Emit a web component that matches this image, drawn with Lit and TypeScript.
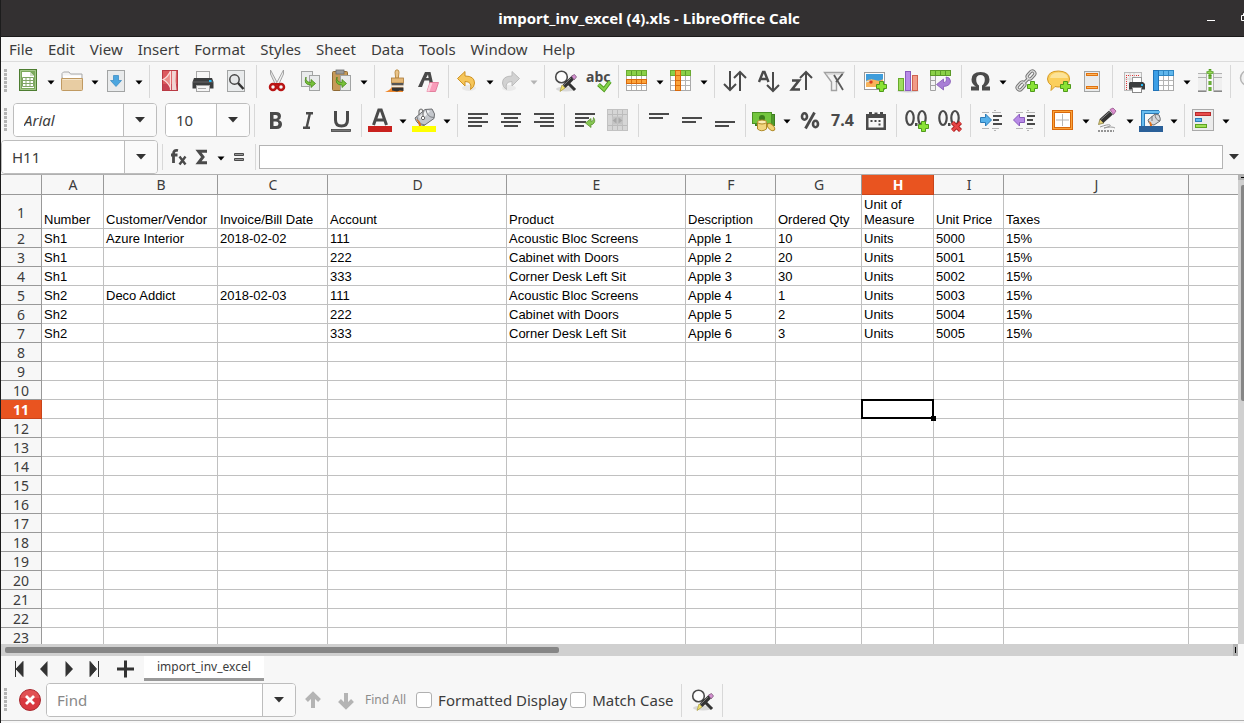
import { LitElement, html, svg, css, nothing } from "lit";
import { customElement, property } from "lit/decorators.js";
import { classMap } from "lit/directives/class-map.js";

const D = "#4a4a4a";

const plus = (x: number, y: number) => svg`<path d="M${x + 3.5} ${y + 0.5}h4v3h3v4h-3v3h-4v-3h-3v-4h3z" fill="#8ae234" stroke="#4f9a1a"/>`;
const lines = (rows: number[][]) => svg`${rows.map(([x, y, w]) => svg`<rect x=${x} y=${y} width=${w} height="2" fill=${D}/>`)}`;
const sheet = (x: number, y: number, w: number, h: number) => svg`<rect x=${x + 0.5} y=${y + 0.5} width=${w - 1} height=${h - 1} fill="#e9ebec" stroke="#a2a4a4"/>`;
const grid = (top: boolean) => svg`
  <rect x="1.5" y="1.5" width="20" height="20" fill="#fff" stroke="#aaa"/>
  <path d="M6.500 6V21M11.500 6V21M16.500 6V21M2 11.500H21M2 16.500H21" stroke="#b4b4b4"/>
  <rect x="1.5" y="1.5" width="20" height="5" fill=${top ? "#8ad048" : "#5fb6ec"} stroke=${top ? "#6aab31" : "#2f86c2"}/>
  <path d="M6.500 2V6M11.500 2V6M16.500 2V6" stroke=${top ? "#5c9a29" : "#2f86c2"}/>`;
const findPencil = svg`
  <ellipse cx="13" cy="20" rx="10" ry="2.500" fill="#000" opacity=".12"/>
  <circle cx="8.500" cy="8" r="5.800" fill="#fdfdfd" stroke="#4a4a4a" stroke-width="1.600"/>
  <path d="M13 12l9 9" stroke="#333" stroke-width="3"/>
  <path d="M20 8.500l-9 9" stroke="#333" stroke-width="4.200"/><path d="M18 9l-8 8" stroke="#777" stroke-width="1"/>
  <path d="M18.500 7l3-1.500 2 2.500-2.500 3z" fill="#d48fd0" stroke="#7d5a7b" stroke-width=".8"/>
  <path d="M9 16l3 3-5 3.500z" fill="#f2e36b" stroke="#a8983a" stroke-width=".7"/>`;

const icons: Record<string, unknown> = {
  new: svg`<rect x="3.500" y=".5" width="17" height="21" fill="#7ba95c" stroke="#4d7d31"/><path d="M4.500 1.500h15v19h-15z" fill="none" stroke="#a5c98c"/>
    <path d="M6 3h8l4 4v12H6z" fill="#fff"/><path d="M14 3v4h4z" fill="#cfdcc6"/>
    <path d="M6.500 8.500h11v9h-11zM10 8.500v9M14 8.500v9M6.500 11.500h11M6.500 14.500h11" fill="none" stroke="#7fa566"/>`,
  open: svg`<path d="M2 9V4.500L3.500 3H9l1.500 2H22v5z" fill="#f3f3f3" stroke="#a9a9a9"/><rect x="3" y="6.500" width="18" height="3" fill="#fff"/>
    <path d="M1.500 9.500h21V20.500q0 1-1 1h-19q-1 0-1-1z" fill="#e8cda3" stroke="#c09a62"/><path d="M2.500 10.500h19" stroke="#f5e6cc"/>`,
  save: svg`${sheet(3, 1, 18, 22)}<path d="M9.500 6.500h5v5h3L12 17.500 6.500 11.500h3z" fill="#4ba6df" stroke="#3287c0" stroke-width=".7"/>`,
  pdf: svg`<rect x="4.500" y="1.500" width="15" height="20" fill="#dc5a5f" stroke="#b93a44"/><path d="M5 15h14v6H5z" fill="#b8324a" opacity=".6"/>
    <path d="M12.500 2L5.500 10.500 12.500 18V2z" fill="#ec8f8c"/><path d="M12.500 2Q10 8 5 10.500 10 13 12.500 19M12.500 2V21" stroke="#f9dcdb" fill="none" stroke-width="1.200"/><path d="M14 2h4q-1 10 .5 19H14z" fill="#f0d4d3"/>`,
  print: svg`<rect x="5.500" y="2.500" width="13" height="8" fill="#f7f7f7" stroke="#a8a8a8"/><path d="M3 9h18l1.500 4v6.500h-21V13z" fill="#3b3d3e"/>
    <path d="M2 13h20" stroke="#666"/><rect x="18" y="11" width="2.500" height="2" fill="#25b8f4"/><rect x="5.500" y="16.500" width="13" height="6" fill="#f5f5f5" stroke="#a4a4a4"/><path d="M7 19.500h8" stroke="#aaa"/>`,
  preview: svg`${sheet(3, 1, 18, 22)}<circle cx="10.500" cy="10.500" r="4.700" fill="#e4e6e7" stroke="#444" stroke-width="1.500"/><path d="M14 14l5.500 6" stroke="#333" stroke-width="2.500"/>`,
  cut: svg`<path d="M5.500 1l7.500 14-2 2L5.500 5z" fill="#e6e6e6" stroke="#9b9b9b" stroke-width=".9"/><path d="M18.500 1L11 15l2 2 5.500-12z" fill="#f2f2f2" stroke="#9b9b9b" stroke-width=".9"/>
    <ellipse cx="8" cy="18" rx="3" ry="3" fill="none" stroke="#b91414" stroke-width="2.500"/><ellipse cx="16" cy="18" rx="3" ry="3" fill="none" stroke="#b91414" stroke-width="2.500"/><path d="M10 15h4" stroke="#b91414" stroke-width="2"/>`,
  copy: svg`${sheet(3, 2, 12, 16)}${sheet(11, 6, 11, 16)}<path d="M8 8q-1 5 5 5.500V10.500l4.500 4-4.500 4V16q-8 0-5-8z" fill="#76c03a" stroke="#48861b" stroke-width=".8"/>`,
  paste: svg`<rect x="3.500" y="2.500" width="15" height="19" rx="1" fill="#c79a58" stroke="#8f6a35"/><rect x="7" y="1" width="8" height="4" fill="#9a9a9a" stroke="#6c6c6c" stroke-width=".8"/>
    ${sheet(11, 6, 11, 16)}<path d="M8 8q-1 5 5 5.500V10.500l4.500 4-4.500 4V16q-8 0-5-8z" fill="#76c03a" stroke="#48861b" stroke-width=".8"/>`,
  brush: svg`<path d="M14 .8q2 0 2 2.500l-.7 6h-2.600l-.7-6q0-2.500 2-2.500z" fill="#e9c48a" stroke="#b58538" stroke-width=".9"/><rect x="8.500" y="9" width="12" height="5" fill="#e5b877" stroke="#aa7a38" stroke-width=".8"/>
    <path d="M2 23q6-2 7-6.500h11V23z" fill="#ef8a2f"/><rect x="8.500" y="14" width="12" height="2.500" fill="#555"/><rect x="8.500" y="16.500" width="12" height="2" fill="#f4ebdd"/><path d="M9 18.500h11.500V22L17 21.500 14 22.500 9 21.500z" fill="#333"/>`,
  clear: svg`<path d="M2 18L9 3h5.500l2.500 11h-3.500l-.4-2.500H8.500L6 18zM10 9h2.600l-.6-3.500z" fill=${D} fill-rule="evenodd"/><path d="M14 13.500h8.500L19.500 22.500h-8.500z" fill="#f99cba" stroke="#e07796" stroke-width=".9"/><path d="M14 14l-3 8.500h2.500L16.500 14z" fill="#fdd0dd"/>`,
  undo: svg`<ellipse cx="14" cy="19" rx="7" ry="3" fill="#000" opacity=".06"/><path d="M10 2.500v4.500q9.500 0 9.500 7 0 4-4 6.500 2-8-5.500-8v4.500L2.500 9.500z" fill="#f6c65a" stroke="#cf9322"/>`,
  redo: svg`<ellipse cx="10" cy="19" rx="7" ry="3" fill="#000" opacity=".05"/><path d="M13 2.500v4.500Q3.500 7 3.500 14q0 4 4 6.500-2-8 5.500-8v4.500l7.500-7.500z" fill="#d2d2d2" stroke="#bcbcbc"/>`,
  find: findPencil,
  spell: svg`<text x="0" y="13" font-size="14" font-weight="700" fill=${D}>abc</text><path d="M12.500 15.500l5.500 5 6-8" fill="none" stroke="#4e9a1c" stroke-width="4"/><path d="M12.500 15.500l5.500 5 6-8" fill="none" stroke="#84d24a" stroke-width="2.200"/>`,
  row: svg`${grid(true)}<rect x="1.500" y="10.500" width="20" height="4" fill="#fba43b" stroke="#d9690c"/><path d="M6.500 11v3M11.500 11v3M16.500 11v3" stroke="#d9690c"/>`,
  column: svg`${grid(true)}<rect x="6.500" y="1.500" width="5" height="20" fill="#fba43b" stroke="#d9690c"/><path d="M7 6.500h4M7 11.500h4M7 16.500h4" stroke="#d9690c"/>`,
  sort: svg`<path d="M7 2v19M1 15l6 6 6-6M17 22V3M11 9l6-6 6 6" fill="none" stroke=${D} stroke-width="2"/>`,
  sortAsc: svg`<path d="M3 13L7 3h1.500l4 10M5 10h6" fill="none" stroke=${D} stroke-width="2.400"/><path d="M17 3v19M11 16l6 6 6-6" fill="none" stroke=${D} stroke-width="2"/>`,
  sortDesc: svg`<path d="M3 11.500h7L3 20.500h8" fill="none" stroke=${D} stroke-width="2.600"/><path d="M17 21V2.500M11 9l6-6 6 6" fill="none" stroke=${D} stroke-width="2"/>`,
  filter: svg`<path d="M2.500 3.500h19L14.500 13v8.500h-5V13z" fill="#f2f2f2" stroke="#a2a2a2" stroke-width="1.400"/><path d="M4 5h16" stroke="#ccc"/><path d="M12 6l9 15M20.500 5L14 13" stroke="#5b5b5b" stroke-width="1.800"/>`,
  image: svg`<rect x="1.500" y="3.500" width="20" height="17" fill="#fff" stroke="#9a9a9a"/><rect x="3" y="5" width="17" height="8" fill="#3f9ddb"/><path d="M3 12q4-3 9-1t8-1v8H3z" fill="#f7b35a"/><path d="M3 13q4-1 6-2" stroke="#cfe8f7" fill="none"/><circle cx="8" cy="13" r="1.700" fill="#dd3d1b"/>${plus(13, 12)}`,
  chart: svg`<ellipse cx="12" cy="22" rx="11" ry="1.500" fill="#000" opacity=".15"/><rect x="2.500" y="9.500" width="5" height="12" fill="#9fdc5d" stroke="#68ab2c"/><rect x="9.500" y="2.500" width="5" height="19" fill="#b78ae6" stroke="#8a5bbd"/><rect x="16.500" y="6.500" width="5" height="15" fill="#f19c88" stroke="#cf6350"/>`,
  pivot: svg`<path d="M1.500 6.500h5v15h-5zM2 11.500h4M2 16.500h4" fill="#f3f3f3" stroke="#a2a2a2"/><rect x="1.500" y="1.500" width="20" height="5" fill="#8ad048" stroke="#5c9a29"/><path d="M6.500 2v4M11.500 2v4M16.500 2v4" stroke="#5c9a29"/>
    <path d="M17 8q4 0 4.500 4 0 5-7 5.500V21L7.500 15.500 14.500 10v3.500q4 0 2.500-5.500z" fill="#a87ed6" stroke="#8459b5" stroke-width=".8"/>`,
  omega: svg`<path d="M3 21.500V17.500H8Q3.500 15 3.500 10.500 3.500 3 12.500 3T21.500 10.500Q21.500 15 17 17.500H22V21.500H14V16.500Q16.800 14.500 16.800 10.500 16.800 6 12.500 6T8.200 10.500Q8.200 14.500 11 16.500V21.500z" fill=${D}/>`,
  link: svg`<g fill="none" stroke="#777" stroke-width="3.200"><rect x="14.500" y="1.500" width="5" height="9" rx="2.500" transform="rotate(42 17 6)"/><rect x="4.500" y="12.500" width="5" height="9" rx="2.500" transform="rotate(42 7 17)"/><path d="M15 9l-6 6"/></g>
    <g fill="none" stroke="#dedede" stroke-width="1.300"><rect x="14.500" y="1.500" width="5" height="9" rx="2.500" transform="rotate(42 17 6)"/><rect x="4.500" y="12.500" width="5" height="9" rx="2.500" transform="rotate(42 7 17)"/><path d="M15 9l-6 6"/></g>${plus(13, 12)}`,
  comment: svg`<path d="M11.500 2Q22.500 2.500 22.500 10T12 18q-2 0-4-.5L4 21.500l.5-5Q.5 14 .5 10 1 2 11.500 2z" fill="#fbcf5c" stroke="#d59a25"/><path d="M3 9q1-5.500 9-5.500t9 5.500z" fill="#fde7a8" opacity=".8"/>${plus(13, 12)}`,
  headers: svg`${sheet(4, 2, 16, 21)}<rect x="6" y="4" width="12" height="3" fill="#e1730f"/><path d="M7 5.500h10" stroke="#fcb45c"/><rect x="6" y="17" width="12" height="3" fill="#e1730f"/><path d="M7 18.500h10" stroke="#fcb45c"/>`,
  printArea: svg`<rect x="3.500" y="3.500" width="17" height="18" fill="#f2f2f2" stroke="#bbb"/><path d="M5 6.500h14M5.500 6v15" stroke="#e03434" stroke-dasharray="1 1"/><path d="M9 4v17M13 4v17M4 10h16" stroke="#d4d4d4"/>
    <rect x="11.500" y="8.500" width="9" height="5" fill="#fff" stroke="#999"/><path d="M9 13h13l2 2v5.500H8V14z" fill="#3b3d3e"/><rect x="20" y="15" width="2" height="2" fill="#25b8f4"/><rect x="11.500" y="18.500" width="9" height="5" fill="#fff" stroke="#888"/>`,
  freeze: svg`${grid(false)}<rect x="1.500" y="1.500" width="5" height="20" fill="#3c9fe6" stroke="#2274b8"/><path d="M11.500 2V6M16.500 2V6" stroke="#2f86c2"/>`,
  split: svg`<path d="M0 4.500h8.500v17H0M0 8.500h8M24 4.500h-8.500v17H24M24 8.500h-8" fill="#efefef" stroke="#b2b2b2"/><path d="M0 22.500h8.500M15.500 22.500H24" stroke="#888"/><path d="M12 6v17" stroke="#4e9a1c" stroke-width="3" stroke-dasharray="4 2"/><path d="M12 6v17" stroke="#84c24c" stroke-width="1" stroke-dasharray="4 2"/><path d="M12 0v7M8.500 3.500h7" stroke="#4e9a1c" stroke-width="2.600"/><path d="M12 1v5M9.500 3.500h5" stroke="#9fdc5d"/>`,
  draw: svg`<circle cx="9" cy="9" r="7.500" fill="#f1f1f1" stroke="#b5b5b5" stroke-width="1.500"/>`,
  bold: svg`<path d="M7 4h6q5 0 5 4.300 0 2.700-2.500 3.700 3.500 1 3.500 4.300Q19 21 13.500 21H7zM10.500 7v3.700h2.300q2 0 2-1.900T12.800 7zM10.500 13.500V18h2.500q2.500 0 2.500-2.300 0-2.200-2.500-2.200z" fill=${D} fill-rule="evenodd"/>`,
  italic: svg`<path d="M10 5.200h7M7 19.800h7M14 5L10.500 20" stroke=${D} stroke-width="2.400" fill="none"/>`,
  underline: svg`<path d="M6.500 3v9q0 6 6 6t6-6V3" fill="none" stroke=${D} stroke-width="3"/><rect x="2.500" y="21.500" width="19" height="2" fill="#777" stroke="#444" stroke-width=".8"/>`,
  fontColor: svg`<path d="M5.500 17L10.800 2h2.400L18.500 17M7.500 12h9" fill="none" stroke=${D} stroke-width="3"/><rect y="18" width="24" height="6" fill="#c9211e"/>`,
  fill: svg`<path d="M3 10L13 1.500 20 1q4 5 2 9.500L12 17.500Q5 17 3 10z" fill="#c4c7cc" stroke="#6b6d70"/><path d="M7 9l8-7 3 1-8 9z" fill="#f2f3f4"/><path d="M14 1.500q1 8 8 8M5 9q1 7 8 8" stroke="#7b7e83" fill="none"/><path d="M7 7V3q2-4 4 0V9" fill="none" stroke="#777" stroke-width="1.200"/><circle cx="11" cy="10" r="1.700" fill="#fff" stroke="#666"/><path d="M4 11q5 2 5 7H7q0-4-3-7z" fill="#e1701a"/><rect y="18" width="24" height="6" fill="#ff0"/>`,
  left: lines([[2, 5, 20], [2, 9, 14], [2, 13, 20], [2, 17, 14]]),
  center: lines([[2, 5, 20], [5, 9, 14], [2, 13, 20], [5, 17, 14]]),
  right: lines([[2, 5, 20], [8, 9, 14], [2, 13, 20], [8, 17, 14]]),
  wrap: svg`${lines([[2, 5, 20], [2, 9, 14], [2, 13, 11], [2, 17, 9]])}<path d="M20.500 9.500q3 4-1 7H18v3L12.500 15 18 10.500v3q3 0 2.500-4z" fill="#86c653" stroke="#4f8a20" stroke-width=".7"/>`,
  merge: svg`<rect x="1.500" y="1.500" width="20" height="21" fill="#d6d6d6" stroke="#c2c2c2"/><path d="M6.500 2v20M11.500 2v20M16.500 2v20M2 6.500h19M2 17.500h19" stroke="#bcbcbc"/><rect x="6" y="8.500" width="11" height="8" fill="#c4c4c4"/><path d="M6.500 12.500l4-3v6zM16.500 12.500l-4-3v6z" fill="#a9a9a9"/>`,
  top: lines([[2, 5, 20], [2, 9, 14]]),
  middle: lines([[2, 9, 20], [2, 13, 14]]),
  bottom: lines([[2, 13, 20], [2, 17, 14]]),
  currency: svg`<rect x="3.500" y="6.500" width="19" height="11" fill="#4e9a2c" stroke="#3d7d1f"/><rect x=".5" y="4.500" width="19" height="11" fill="#73c63e" stroke="#4b9125"/><circle cx="10" cy="10" r="3" fill="#3c7d1c"/><ellipse cx="19" cy="19" rx="4.500" ry="2.500" transform="rotate(45 19 19)" fill="#f0d273" stroke="#b08a27"/>
    <path d="M5.500 14v7q4 3.500 9 0v-7z" fill="#f2d67e" stroke="#b08a27"/><ellipse cx="10" cy="14" rx="4.500" ry="2" fill="#fbeeb5" stroke="#b08a27"/>`,
  percent: svg`<g fill="none" stroke=${D}><ellipse cx="6.500" cy="8.500" rx="2.500" ry="3.200" stroke-width="2.600"/><ellipse cx="17.500" cy="16" rx="2.500" ry="3.200" stroke-width="2.600"/><path d="M16.500 4.500l-9 16" stroke-width="2.800"/></g>`,
  number: svg`<text x="0" y="18" font-size="16" font-weight="700" fill=${D}>7.4</text>`,
  date: svg`<path d="M2 6h20v16H2zM4.500 10v9.500h15V10z" fill=${D} fill-rule="evenodd"/><path d="M5 4h3v3H5zM10.500 4.500h3V7h-3zM16 4h3v3h-3z" fill=${D}/><path d="M6.500 13h10M14.500 16.500h4" stroke=${D} stroke-width="2" stroke-dasharray="2 2"/>`,
  addDec: svg`<g fill="none" stroke=${D} stroke-width="2.200"><ellipse cx="5" cy="10" rx="3.700" ry="7"/><ellipse cx="17" cy="10" rx="3.700" ry="7"/></g><rect x="10" y="15" width="2.500" height="3" fill=${D}/>${plus(13, 13)}`,
  delDec: svg`<g fill="none" stroke=${D} stroke-width="2.200"><ellipse cx="5" cy="10" rx="3.700" ry="7"/><ellipse cx="17" cy="10" rx="3.700" ry="7"/></g><rect x="10" y="15" width="2.500" height="3" fill=${D}/><path d="M14.500 14.500l8 8M22.500 14.500l-8 8" stroke="#a31616" stroke-width="4.200"/><path d="M14.500 14.500l8 8M22.500 14.500l-8 8" stroke="#e64545" stroke-width="2.500"/>`,
  indent: svg`<path d="M3 4.500h7M13 4.500h9M3 20.500h7M13 20.500h7M15 2.500h2M15 22.500h2" stroke="#b5b5b5"/><path d="M14 8h9M14 12h6M14 16h9" stroke=${D} stroke-width="2"/><path d="M1.500 9.500h5v-3.500l6 6-6 6v-3.500h-5z" fill="#57b1ea" stroke="#2c7cb8"/>`,
  outdent: svg`<path d="M4 4.500h7M14 4.500h9M4 20.500h7M14 20.500h7M15 2.500h2M15 22.500h2" stroke="#b5b5b5"/><path d="M15 8h8M15 12h6M15 16h8" stroke=${D} stroke-width="2"/><path d="M12.500 9.500h-5v-3.500l-6 6 6 6v-3.500h5z" fill="#b78ae6" stroke="#8a5bbd"/>`,
  borders: svg`<rect x="2.500" y="3.500" width="18" height="17" fill="#fff" stroke="#d9690c" stroke-width="3"/><rect x="2.500" y="3.500" width="18" height="17" fill="none" stroke="#fba43b"/><path d="M11.500 6v12M5 12h13" stroke="#b5b5b5"/>`,
  lineStyle: svg`<path d="M5 19q8-3 10-2t-6 3q8-2 11 0" stroke="#999" fill="none"/><path d="M3 23h16" stroke="#333" stroke-dasharray="2 1"/><path d="M3.500 16.500L5 11l4 4z" fill="#e9d57a" stroke="#7a7030" stroke-width=".7"/><path d="M6.500 13L16 4.500" stroke="#333" stroke-width="5.500"/><path d="M6 11.500L15 3.500" stroke="#888"/><path d="M15 1.500l3-1.500 3 3-2.500 3.500z" fill="#dc8fd0" stroke="#93548a" stroke-width=".8"/>`,
  borderColor: svg`<path d="M4 18V4h16" fill="none" stroke="#2c7cb8" stroke-width="4"/><path d="M4 18V4h17" fill="none" stroke="#68bdf0" stroke-width="2"/><path d="M9 12l7-6 4 1q2 4 1 6l-6 4q-5 0-6-5z" fill="#d7d9dc" stroke="#6b6d70"/><path d="M13 8v5M16 6q0 6 5 7" stroke="#777" fill="none"/><path d="M10 13q3 1 3 5h-2q0-3-1-5z" fill="#e1701a"/><rect y="18" width="24" height="6" fill="#2a6099"/>`,
  conditional: svg`<rect x="1.500" y="1.500" width="21" height="21" fill="#ececec" stroke="#a9a9a9"/><rect x="4.500" y="4.500" width="15" height="3" fill="#e84c4c" stroke="#b92a2a"/><rect x="4.500" y="10.500" width="6" height="3" fill="#62b7ee" stroke="#2c7cb8"/><rect x="4.500" y="16.500" width="11" height="3" fill="#9fe055" stroke="#5fa321"/>`,
  fx: svg`<path d="M12 5.500q-4.500-1-4.500 3.500V18M5 10h6.500" fill="none" stroke=${D} stroke-width="2.800"/><path d="M13.500 11.500l6 8M19.500 11.500l-6 8" stroke=${D} stroke-width="2.400"/>`,
  sum: svg`<path d="M17 6.200H8.500l4.500 5.800-4.500 5.800H17" fill="none" stroke=${D} stroke-width="3"/>`,
  equals: svg`<path d="M7.500 8.500h9v2h-9zM7.500 13.500h9v2h-9z" fill="#999" stroke=${D}/>`,
  first: svg`<path d="M8.500 4v16M16 4.500L9 12 16 19.500z" fill="#333" stroke="#333"/>`,
  prev: svg`<path d="M15.500 4L8 12l7.500 8z" fill="#333"/>`,
  next: svg`<path d="M8.500 4L16 12l-7.500 8z" fill="#333"/>`,
  last: svg`<path d="M16.500 4v16M8 4.500L14.500 12 8 19.500z" fill="#333" stroke="#333"/>`,
  add: svg`<path d="M12.500 3.500v17M4 12h17" stroke="#333" stroke-width="3"/>`,
  close: svg`<circle cx="12" cy="12" r="10.500" fill="#d9383f" stroke="#a82a30"/><path d="M2.500 10q2-8 9.500-8t9.500 8z" fill="#ea6a6a" opacity=".5"/><path d="M8 8l8 8M16 8l-8 8" stroke="#fff" stroke-width="2.800"/>`,
  up: svg`<path d="M12 20V7M5.500 12.500L12 6l6.500 6.500" fill="none" stroke="#b4b4b4" stroke-width="4"/>`,
  down: svg`<path d="M12 5v13M5.500 12.500L12 19l6.500-6.500" fill="none" stroke="#b4b4b4" stroke-width="4"/>`,
};

const icon = (name: string) => html`<svg class="icon" width="24" height="24" viewBox="0 0 24 24" aria-hidden="true">${icons[name]}</svg>`;
const caret = html`<svg width="8" height="5" viewBox="0 0 8 5" aria-hidden="true"><path d="M.5 .5h7L4 4.500z" fill="currentColor"/></svg>`;
const bigCaret = html`<svg width="10" height="6" viewBox="0 0 10 6" aria-hidden="true"><path d="M0 0h10L5 5.500z" fill="#333"/></svg>`;

/** "|" is a separator; a trailing "+" adds a drop-down arrow; "!" greys it out. */
const STANDARD = "new+ open+ save+ | pdf print preview | cut copy paste+ | brush clear | undo+ redo+! | find spell | row+ column+ | sort sortAsc sortDesc filter | image chart pivot | omega+ link comment headers | printArea freeze+ split | draw";
const FORMATTING = "| bold italic underline | fontColor+ fill+ | left center right | wrap merge | top middle bottom | currency+ percent number date | addDec delDec | indent outdent | borders+ lineStyle+ borderColor+ | conditional+";

const tools = (spec: string) =>
  spec.split(" ").map((t) => {
    if (t === "|") return html`<span class="sep"></span>`;
    const name = t.replace(/[+!]/g, "");
    if (!t.includes("+")) return html`<button class="tool" aria-label=${name}>${icon(name)}</button>`;
    return html`<button class="tool narrow" aria-label=${name}>${icon(name)}</button><button class=${classMap({ drop: true, dim: t.includes("!") })} aria-label="${name} options">${caret}</button>`;
  });

const COLS = [
  ["A", 62], ["B", 114], ["C", 110], ["D", 179], ["E", 179], ["F", 90], ["G", 86], ["H", 72], ["I", 70], ["J", 185],
] as const;

const DATA: string[][] = [
  ["Number", "Customer/Vendor", "Invoice/Bill Date", "Account", "Product", "Description", "Ordered Qty", "Unit of Measure", "Unit Price", "Taxes"],
  ["Sh1", "Azure Interior", "2018-02-02", "111", "Acoustic Bloc Screens", "Apple 1", "10", "Units", "5000", "15%"],
  ["Sh1", "", "", "222", "Cabinet with Doors", "Apple 2", "20", "Units", "5001", "15%"],
  ["Sh1", "", "", "333", "Corner Desk Left Sit", "Apple 3", "30", "Units", "5002", "15%"],
  ["Sh2", "Deco Addict", "2018-02-03", "111", "Acoustic Bloc Screens", "Apple 4", "1", "Units", "5003", "15%"],
  ["Sh2", "", "", "222", "Cabinet with Doors", "Apple 5", "2", "Units", "5004", "15%"],
  ["Sh2", "", "", "333", "Corner Desk Left Sit", "Apple 6", "3", "Units", "5005", "15%"],
];

@customElement("calc-grid")
export class CalcGrid extends LitElement {
  @property({ type: Number }) rows = 23;
  @property() column = "H";
  @property({ type: Number }) row = 11;

  static styles = css`
    :host { display: block; overflow: hidden; background: #fff; }
    table { width: 100%; table-layout: fixed; border-collapse: separate; border-spacing: 0; font: 13px/15px "Liberation Sans", Arial, sans-serif; color: #000; }
    th { box-sizing: border-box; padding: 0; background: #f7f7f7; color: #3c3c3c; font: 14px/18px "Noto Sans", sans-serif; text-align: center; border: 0 solid #999; border-width: 0 1px 1px 0; }
    thead th { height: 20px; padding-left: 1px; }
    tbody th { padding-top: 1px; line-height: 17px; }
    thead th:last-child, td:last-child { border-right: 0; }
    .index { width: 41px; }
    td { box-sizing: border-box; height: 19px; padding: 2px 2px 0; vertical-align: bottom; border: 0 solid #c0c0c0; border-width: 0 1px 1px 0; line-height: 16px; }
    .tall td { height: 34px; line-height: 15px; padding: 0 2px 1px; }
    .on { background: #e95420; color: #fff; font-weight: 700; border-color: #c8441a; }
    .cursor { position: relative; }
    .frame { position: absolute; inset: -1px; border: 2px solid #000; }
    .handle { position: absolute; right: -4px; bottom: -4px; width: 5px; height: 5px; background: #000; }
  `;

  render() {
    return html`<table>
      <colgroup><col class="index">${COLS.map(([, w]) => html`<col style="width:${w}px">`)}<col></colgroup>
      <thead><tr><th></th>${COLS.map(([c]) => html`<th scope="col" class=${classMap({ on: c === this.column })}>${c}</th>`)}<th></th></tr></thead>
      <tbody>${Array.from({ length: this.rows }, (_, i) => html`<tr class=${classMap({ tall: i === 0 })}>
        <th scope="row" class=${classMap({ on: i + 1 === this.row })}>${i + 1}</th>
        ${COLS.map(([c], k) => {
          const cur = c === this.column && i + 1 === this.row;
          return html`<td class=${classMap({ cursor: cur })}>${DATA[i]?.[k] ?? nothing}${cur ? html`<span class="frame"><span class="handle"></span></span>` : nothing}</td>`;
        })}<td></td></tr>`)}</tbody>
    </table>`;
  }
}

@customElement("app-root")
export class AppRoot extends LitElement {
  static styles = css`
    :host { display: flex; flex-direction: column; box-sizing: border-box; height: 100vh; overflow: hidden; border-left: 1px solid #1c1c1c; background: #f7f7f7; color: #3c3c3c; font: 15px/20px "Noto Sans", sans-serif; }
    button { font: inherit; color: inherit; background: none; border: 0; padding: 0; margin: 0; }
    input { font: inherit; color: inherit; box-sizing: border-box; min-width: 0; margin: 0; outline: none; }
    svg { display: block; flex: none; }
    .icon { overflow: visible; }
    .title { display: flex; align-items: center; flex: none; height: 36px; background: #333031; border-bottom: 1px solid #1b1a1a; color: #fff; overflow: hidden; }
    h1 { flex: 1; margin: 0; padding-left: 102px; font: 700 15px/20px "Noto Sans", sans-serif; text-align: center; }
    .min, .max { flex: none; height: 24px; overflow: hidden; }
    .min { width: 40px; }
    .max { width: 9px; }
    .menu { display: flex; gap: 15px; flex: none; height: 24px; padding-left: 8px; border-bottom: 1px solid #dcdcdc; }
    .menu button { white-space: nowrap; }
    .bar { display: flex; align-items: center; flex: none; box-sizing: border-box; height: 39px; padding-bottom: 1px; overflow: hidden; }
    .bar > * { flex: none; }
    .grip { width: 3px; height: 24px; margin: 0 6px 0 3px; background: repeating-linear-gradient(#b4b4b4 0 3px, transparent 3px 4px); }
    .tool { width: 33px; height: 32px; padding: 4px 4px 4px 5px; }
    .narrow { width: 31px; padding: 4px 4px 4px 3px; }
    .tight { width: 24px; height: 32px; padding: 4px 0; }
    .drop { width: 13px; height: 32px; padding: 3px 2px 0 3px; color: #000; }
    .dim { color: #b4b4b4; }
    .sep { width: 1px; height: 33px; margin: 0 3px 0 4px; background: #d8d8d8; }
    .combo { display: flex; box-sizing: border-box; height: 34px; border: 1px solid #bdbdbd; border-radius: 4px; background: #fff; overflow: hidden; }
    .combo input { flex: 1; border: 0; background: #fff; padding: 0 10px 1px; }
    .combo button { display: flex; align-items: center; justify-content: center; width: 33px; border-left: 1px solid #bdbdbd; background: #fafafa; }
    .font { width: 144px; margin-right: 8px; }
    .font input { font-style: italic; }
    .size { width: 85px; }
    .formula { height: 35px; padding: 0; border-bottom: 1px solid #b0b0b0; }
    .formula .sep { height: 26px; }
    .cell { width: 157px; }
    .formula .line { flex: 1; height: 24px; border: 1px solid #b4b4b4; background: #fff; padding: 0 4px; }
    .expand { display: flex; justify-content: center; width: 21px; }
    .sheet { display: flex; flex: 1; min-height: 0; }
    calc-grid { flex: 1; min-width: 0; }
    .vscroll { flex: none; width: 6px; background: #d0d0d0; }
    .vcap { box-sizing: border-box; height: 5px; padding: 2px 0 0 3px; background: #b2b2b2; }
    .vcap::before { content: ""; display: block; height: 1px; background: #000; }
    .vthumb { height: 46%; margin: 5px 0 0 3px; border-radius: 2px 0 0 2px; background: #868686; }
    .hscroll { display: flex; align-items: center; flex: none; height: 12px; margin-right: 6px; background: #d0d0d0; }
    .htrack { flex: 1; }
    .hthumb { width: 45%; height: 6px; margin-left: 4px; border-radius: 2px; background: #868686; }
    .hcap { box-sizing: border-box; width: 5px; height: 12px; padding: 3px 2px; background: #b2b2b2; }
    .hcap::before { content: ""; display: block; width: 1px; height: 6px; background: #000; }
    .tabs { display: flex; align-items: center; flex: none; height: 25px; margin-bottom: 1px; padding-left: 6px; }
    .tabs .nav { width: 25px; height: 24px; }
    .tabs .plus { width: 37px; padding-left: 6px; }
    .tab { box-sizing: border-box; height: 25px; padding: 0 13px; border-bottom: 3px solid #999; background: #fff; font-size: 12px; line-height: 20px; }
    .findbar { height: 39px; padding-bottom: 2px; border-bottom: 1px solid #b0b0b0; margin-bottom: 2px; }
    .findbar .shut { width: 33px; padding-left: 5px; }
    .search { width: 250px; }
    .search input::placeholder { color: #888; opacity: 1; }
    .findall { padding: 0 10px 0 3px; font-size: 12px; color: #8c8c8c; }
    .check { display: flex; align-items: center; gap: 6px; margin-right: 3px; }
    .check input { appearance: none; width: 16px; height: 16px; border: 1px solid #b0b0b0; border-radius: 3px; background: #fff; }
  `;

  render() {
    return html`
      <header class="title">
        <h1>import_inv_excel (4).xls - LibreOffice Calc</h1>
        <button class="min" aria-label="Minimize"><svg width="40" height="24" viewBox="0 0 40 24"><path d="M12 14.500h8" stroke="#fff"/></svg></button>
        <button class="max" aria-label="Maximize"><svg width="16" height="24" viewBox="0 0 16 24"><path d="M6.500 9.500h6v5h-6zM8.500 9V7.500h6V12" fill="none" stroke="#fff"/></svg></button>
      </header>
      <nav class="menu">${["File", "Edit", "View", "Insert", "Format", "Styles", "Sheet", "Data", "Tools", "Window", "Help"].map((m) => html`<button>${m}</button>`)}</nav>
      <div class="bar" role="toolbar" aria-label="Standard"><span class="grip"></span>${tools(STANDARD)}</div>
      <div class="bar" role="toolbar" aria-label="Formatting">
        <span class="grip"></span>
        <div class="combo font"><input aria-label="Font name" .value=${"Arial"}><button aria-label="Font list">${bigCaret}</button></div>
        <div class="combo size"><input aria-label="Font size" .value=${"10"}><button aria-label="Size list">${bigCaret}</button></div>
        ${tools(FORMATTING)}
      </div>
      <div class="bar formula">
        <div class="combo cell"><input aria-label="Name box" .value=${"H11"}><button aria-label="Named ranges">${bigCaret}</button></div>
        <span class="sep"></span>
        <button class="tight" aria-label="Function wizard">${icon("fx")}</button>
        <button class="tight" aria-label="Sum">${icon("sum")}</button>
        <button class="drop" aria-label="Sum options">${caret}</button>
        <button class="tight" aria-label="Formula">${icon("equals")}</button>
        <span class="sep"></span>
        <input class="line" aria-label="Input line">
        <button class="expand" aria-label="Expand formula bar">${bigCaret}</button>
      </div>
      <div class="sheet">
        <calc-grid></calc-grid>
        <div class="vscroll"><div class="vcap"></div><div class="vthumb"></div></div>
      </div>
      <div class="hscroll"><div class="htrack"><div class="hthumb"></div></div><div class="hcap"></div></div>
      <div class="tabs">
        ${[["first", "First sheet"], ["prev", "Previous sheet"], ["next", "Next sheet"], ["last", "Last sheet"]].map(([n, l]) => html`<button class="nav" aria-label=${l}>${icon(n)}</button>`)}
        <button class="plus" aria-label="Add sheet">${icon("add")}</button>
        <button class="tab">import_inv_excel</button>
      </div>
      <div class="bar findbar" role="toolbar" aria-label="Find">
        <span class="grip"></span>
        <button class="tool shut" aria-label="Close find bar">${icon("close")}</button>
        <div class="combo search"><input aria-label="Find" placeholder="Find"><button aria-label="Search history">${bigCaret}</button></div>
        ${tools("up down")}
        <button class="findall">Find All</button>
        <label class="check"><input type="checkbox">Formatted Display</label>
        <label class="check"><input type="checkbox">Match Case</label>
        ${tools("| find |")}
      </div>
    `;
  }
}
